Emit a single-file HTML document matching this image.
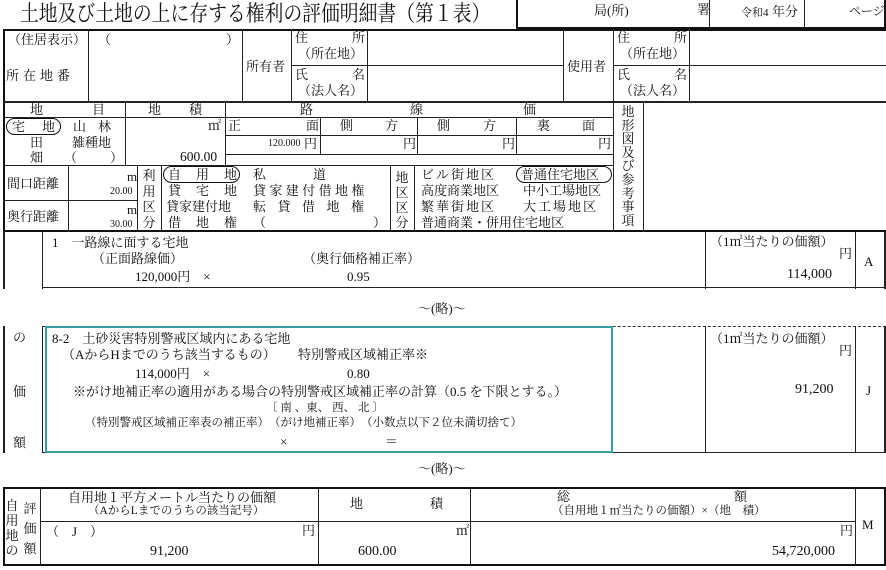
<!DOCTYPE html>
<html><head><meta charset="utf-8">
<style>
*{margin:0;padding:0;box-sizing:border-box}
body{width:886px;height:570px;background:#fff;position:relative;overflow:hidden;font-family:"Liberation Serif","Noto Serif CJK SC",serif;font-size:13px;color:#111}
.h{position:absolute;height:1px;background:#222}
.v{position:absolute;width:1px;background:#222}
.t{position:absolute;white-space:nowrap;line-height:1}
.s{font-size:10px}
.s11{font-size:11.5px}
.vt{position:absolute;line-height:14px;width:14px;text-align:center}
.c{position:absolute;border:1.3px solid #111;border-radius:9px}
</style></head><body>
<!-- title -->
<div class="t" style="left:20px;top:3px;font-size:22px;transform:scaleX(0.855);transform-origin:0 0">土地及び土地の上に存する権利の評価明細書（第１表）</div>
<div style="position:absolute;left:516px;top:0;width:370px;height:29px;border:2px solid #111;border-top:none"></div>
<div class="v" style="left:709px;top:0;height:28px"></div>
<div class="v" style="left:804px;top:0;height:28px"></div>
<div class="t" style="left:594px;top:4px">局(所)</div>
<div class="t" style="left:697px;top:3px">署</div>
<div class="t" style="left:741px;top:8px;font-size:11px">令和4</div>
<div class="t" style="left:772px;top:5px">年分</div>
<div class="t" style="left:849px;top:5px;font-size:12px">ページ</div>

<!-- main top table -->
<div style="position:absolute;left:3px;top:29px;width:883px;height:203px;border:2px solid #111;border-right:none"></div>
<div class="v" style="left:88px;top:29px;height:73px"></div>
<div class="v" style="left:242px;top:29px;height:73px"></div>
<div class="v" style="left:291px;top:29px;height:73px"></div>
<div class="v" style="left:367px;top:29px;height:73px"></div>
<div class="v" style="left:563px;top:29px;height:73px"></div>
<div class="v" style="left:613px;top:29px;height:203px"></div>
<div class="v" style="left:689px;top:29px;height:73px"></div>
<div class="h" style="left:291px;top:65px;width:272px"></div>
<div class="h" style="left:613px;top:65px;width:273px"></div>
<div class="h" style="left:3px;top:101px;width:883px;height:2px"></div>
<div class="t" style="left:8px;top:33px">（住居表示）</div>
<div class="t" style="left:98px;top:33px">（</div>
<div class="t" style="left:226px;top:33px">）</div>
<div class="t" style="left:6px;top:69px;letter-spacing:4px">所在地番</div>
<div class="t" style="left:246px;top:60px">所有者</div>
<div class="t" style="left:295px;top:31px">住</div><div class="t" style="left:352px;top:31px">所</div>
<div class="t" style="left:298px;top:47px">（所在地）</div>
<div class="t" style="left:295px;top:68px">氏</div><div class="t" style="left:352px;top:68px">名</div>
<div class="t" style="left:298px;top:84px">（法人名）</div>
<div class="t" style="left:567px;top:60px">使用者</div>
<div class="t" style="left:617px;top:31px">住</div><div class="t" style="left:674px;top:31px">所</div>
<div class="t" style="left:620px;top:47px">（所在地）</div>
<div class="t" style="left:617px;top:68px">氏</div><div class="t" style="left:674px;top:68px">名</div>
<div class="t" style="left:620px;top:84px">（法人名）</div>

<!-- row 2/3 -->
<div class="v" style="left:125px;top:102px;height:64px"></div>
<div class="v" style="left:225px;top:102px;height:64px"></div>
<div class="v" style="left:643px;top:102px;height:130px"></div>
<div class="h" style="left:3px;top:117px;width:610px"></div>
<div class="h" style="left:225px;top:135px;width:388px"></div>
<div class="h" style="left:225px;top:154px;width:388px"></div>
<div class="h" style="left:3px;top:165px;width:610px"></div>
<div class="v" style="left:320px;top:117px;height:37px"></div>
<div class="v" style="left:417px;top:117px;height:37px"></div>
<div class="v" style="left:516px;top:117px;height:37px"></div>
<div class="t" style="left:30px;top:103px">地</div><div class="t" style="left:92px;top:103px">目</div>
<div class="t" style="left:148px;top:103px">地</div><div class="t" style="left:189px;top:103px">積</div>
<div class="t" style="left:300px;top:103px">路</div><div class="t" style="left:410px;top:103px">線</div><div class="t" style="left:523px;top:103px">価</div>
<div class="c" style="left:6px;top:118px;width:55px;height:17px"></div>
<div class="t" style="left:12px;top:120px">宅</div><div class="t" style="left:42px;top:120px">地</div>
<div class="t" style="left:73px;top:120px">山</div><div class="t" style="left:98px;top:120px">林</div>
<div class="t" style="left:30px;top:136px">田</div><div class="t" style="left:72px;top:136px">雑種地</div>
<div class="t" style="left:30px;top:151px">畑</div><div class="t" style="left:64px;top:151px">（</div><div class="t" style="left:110px;top:151px">）</div>
<div class="t" style="left:208px;top:119px">㎡</div>
<div class="t" style="left:180px;top:150px;font-size:13.5px">600.00</div>
<div class="t" style="left:228px;top:119px">正</div><div class="t" style="left:306px;top:119px">面</div>
<div class="t" style="left:340px;top:119px">側</div><div class="t" style="left:385px;top:119px">方</div>
<div class="t" style="left:437px;top:119px">側</div><div class="t" style="left:483px;top:119px">方</div>
<div class="t" style="left:537px;top:119px">裏</div><div class="t" style="left:582px;top:119px">面</div>
<div class="t s" style="left:268px;top:139px">120.000</div><div class="t" style="left:304px;top:137px">円</div>
<div class="t" style="left:403px;top:137px">円</div>
<div class="t" style="left:502px;top:137px">円</div>
<div class="t" style="left:598px;top:137px">円</div>

<!-- row 4 -->
<div class="v" style="left:68px;top:165px;height:67px"></div>
<div class="v" style="left:137px;top:165px;height:67px"></div>
<div class="v" style="left:161px;top:165px;height:67px"></div>
<div class="v" style="left:390px;top:165px;height:67px"></div>
<div class="v" style="left:414px;top:165px;height:67px"></div>
<div class="h" style="left:3px;top:200px;width:134px"></div>
<div class="t" style="left:7px;top:177px">間口距離</div>
<div class="t" style="left:127px;top:170px">m</div>
<div class="t s" style="left:110px;top:187px">20.00</div>
<div class="t" style="left:7px;top:210px">奥行距離</div>
<div class="t" style="left:127px;top:203px">m</div>
<div class="t s" style="left:110px;top:220px">30.00</div>
<div class="vt" style="left:142px;top:168px;line-height:15.5px">利用区分</div>
<div class="c" style="left:163px;top:166px;width:77px;height:17px"></div>
<div class="t" style="left:168px;top:168px">自</div><div class="t" style="left:196px;top:168px">用</div><div class="t" style="left:224px;top:168px">地</div>
<div class="t" style="left:168px;top:184px">貸</div><div class="t" style="left:196px;top:184px">宅</div><div class="t" style="left:224px;top:184px">地</div>
<div class="t" style="left:166px;top:200px">貸家建付地</div>
<div class="t" style="left:168px;top:216px">借</div><div class="t" style="left:196px;top:216px">地</div><div class="t" style="left:224px;top:216px">権</div>
<div class="t" style="left:253px;top:168px">私</div><div class="t" style="left:313px;top:168px">道</div>
<div class="t" style="left:253px;top:184px;letter-spacing:3.4px">貸家建付借地権</div>
<div class="t" style="left:253px;top:200px;letter-spacing:11.5px">転貸借地権</div>
<div class="t" style="left:253px;top:216px">（</div><div class="t" style="left:373px;top:216px">）</div>
<div class="vt" style="left:395px;top:170px;line-height:15px">地区区分</div>
<div class="t" style="left:421px;top:168px;letter-spacing:2px">ビル街地区</div>
<div class="c" style="left:516px;top:166px;width:96px;height:17px"></div>
<div class="t" style="left:521px;top:168px">普通住宅地区</div>
<div class="t" style="left:421px;top:184px">高度商業地区</div><div class="t" style="left:523px;top:184px">中小工場地区</div>
<div class="t" style="left:421px;top:200px;letter-spacing:2px">繁華街地区</div><div class="t" style="left:523px;top:200px;letter-spacing:2px">大工場地区</div>
<div class="t" style="left:421px;top:216px">普通商業・併用住宅地区</div>
<div class="vt" style="left:621px;top:105px;line-height:13.6px">地形図及び参考事項</div>

<!-- section 1 -->
<div class="v" style="left:3px;top:232px;height:57px;width:2px"></div>
<div class="v" style="left:42px;top:232px;height:57px"></div>
<div class="v" style="left:705px;top:232px;height:57px"></div>
<div class="v" style="left:855px;top:232px;height:57px"></div>
<div class="v" style="left:884px;top:232px;height:57px;width:2px"></div>
<div class="h" style="left:42px;top:287px;width:844px"></div>
<div class="t" style="left:52px;top:236px">1　一路線に面する宅地</div>
<div class="t" style="left:92px;top:252px">（正面路線価）</div>
<div class="t" style="left:303px;top:252px">（奥行価格補正率）</div>
<div class="t" style="left:135px;top:270px">120,000円　×</div>
<div class="t" style="left:347px;top:270px">0.95</div>
<div class="t" style="left:710px;top:235px">（1㎡当たりの価額）</div>
<div class="t" style="left:839px;top:247px">円</div>
<div class="t" style="left:787px;top:268px;font-size:14px">114,000</div>
<div class="t" style="left:864px;top:255px">A</div>
<div class="t" style="left:418px;top:302px">～(略)～</div>

<!-- section 2 -->
<div class="v" style="left:3px;top:326px;height:127px;width:2px"></div>
<div class="v" style="left:42px;top:326px;height:127px"></div>
<div class="h" style="left:42px;top:326px;width:844px;background:none;border-top:1px dashed #333"></div>
<div class="v" style="left:705px;top:326px;height:127px"></div>
<div class="v" style="left:855px;top:326px;height:127px"></div>
<div class="v" style="left:884px;top:326px;height:127px;width:2px"></div>
<div class="h" style="left:42px;top:452px;width:844px"></div>
<div style="position:absolute;left:45px;top:326px;width:568px;height:127px;border:2px solid #3a9fa2"></div>
<div class="t" style="left:13px;top:331px">の</div>
<div class="t" style="left:13px;top:385px">価</div>
<div class="t" style="left:13px;top:436px">額</div>
<div class="t" style="left:52px;top:332px">8-2　土砂災害特別警戒区域内にある宅地</div>
<div class="t" style="left:62px;top:348px">（AからHまでのうち該当するもの）</div>
<div class="t" style="left:298px;top:348px">特別警戒区域補正率※</div>
<div class="t" style="left:135px;top:367px">114,000円　×</div>
<div class="t" style="left:347px;top:367px">0.80</div>
<div class="t" style="left:73px;top:385px">※がけ地補正率の適用がある場合の特別警戒区域補正率の計算（0.5 を下限とする。）</div>
<div class="t s11" style="left:266px;top:403px">〔 南 、東、 西、 北 〕</div>
<div class="t s11" style="left:85px;top:418px">（特別警戒区域補正率表の補正率）　（がけ地補正率）　（小数点以下２位未満切捨て）</div>
<div class="t" style="left:280px;top:435px">×</div>
<div class="t" style="left:385px;top:435px">＝</div>
<div class="t" style="left:710px;top:332px">（1㎡当たりの価額）</div>
<div class="t" style="left:839px;top:344px">円</div>
<div class="t" style="left:795px;top:383px;font-size:14px">91,200</div>
<div class="t" style="left:866px;top:384px">J</div>
<div class="t" style="left:418px;top:462px">～(略)～</div>

<!-- bottom table -->
<div style="position:absolute;left:3px;top:487px;width:883px;height:79px;border:2px solid #111"></div>
<div class="v" style="left:40px;top:487px;height:79px"></div>
<div class="v" style="left:318px;top:487px;height:79px"></div>
<div class="v" style="left:470px;top:487px;height:79px"></div>
<div class="v" style="left:855px;top:487px;height:79px"></div>
<div class="h" style="left:40px;top:521px;width:815px"></div>
<div class="vt" style="left:5px;top:498px;line-height:15px">自用地の</div>
<div class="vt" style="left:23px;top:499px;line-height:20px">評価額</div>
<div class="t" style="left:68px;top:491px">自用地１平方メートル当たりの価額</div>
<div class="t s11" style="left:88px;top:506px">（AからLまでのうちの該当記号）</div>
<div class="t" style="left:350px;top:497px">地</div><div class="t" style="left:430px;top:497px">積</div>
<div class="t" style="left:557px;top:490px">総</div><div class="t" style="left:734px;top:490px">額</div>
<div class="t s11" style="left:552px;top:506px">（自用地１㎡当たりの価額）×（地　積）</div>
<div class="t" style="left:46px;top:525px">（　J　）</div>
<div class="t" style="left:302px;top:524px">円</div>
<div class="t" style="left:150px;top:545px;font-size:14px">91,200</div>
<div class="t" style="left:456px;top:524px">㎡</div>
<div class="t" style="left:358px;top:545px;font-size:14px">600.00</div>
<div class="t" style="left:840px;top:524px">円</div>
<div class="t" style="left:772px;top:545px;font-size:14px">54,720,000</div>
<div class="t" style="left:862px;top:518px">M</div>
</body></html>
